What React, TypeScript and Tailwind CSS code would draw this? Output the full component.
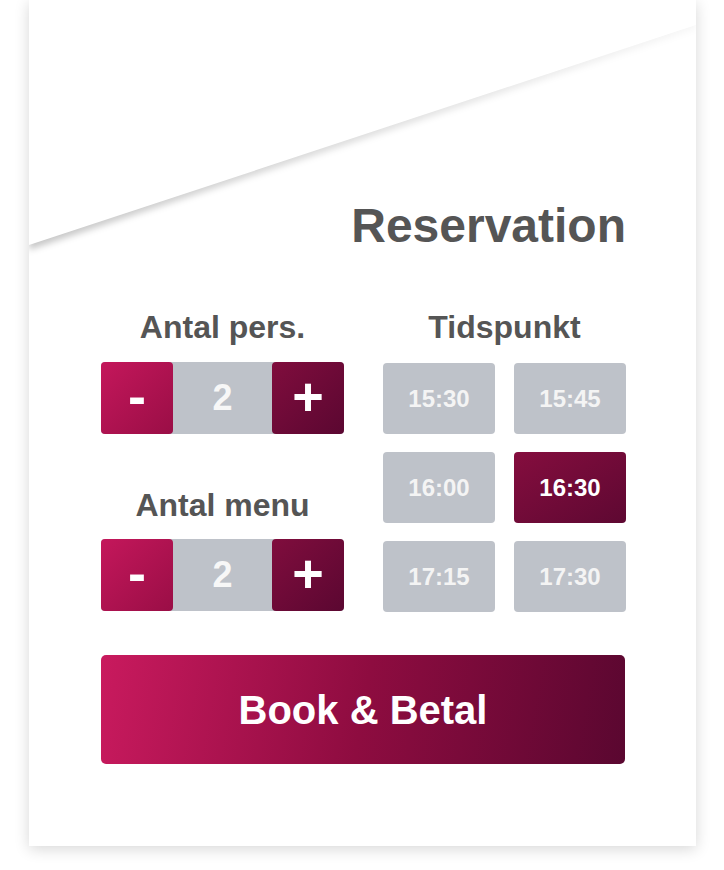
import React, { useState } from "react";

const times = ["15:30", "15:45", "16:00", "16:30", "17:15", "17:30"];

// Stepper med minus / tal / plus
function Stepper({ value, onChange }: { value: number; onChange: (v: number) => void }) {
  return (
    <div className="flex h-[72px] w-[243px] rounded-[4px] bg-[#bec2c9]">
      <button
        onClick={() => onChange(Math.max(1, value - 1))}
        className="flex w-[72px] items-center justify-center rounded-[4px] bg-gradient-to-br from-[#c4175b] to-[#9a0e46] pb-[4px] text-[54px] leading-none font-bold text-white"
      >
        -
      </button>
      <div className="flex flex-1 items-center justify-center text-[36px] leading-none font-bold text-[#f7f7f7]">
        {value}
      </div>
      <button
        onClick={() => onChange(value + 1)}
        className="flex w-[72px] items-center justify-center rounded-[4px] bg-gradient-to-br from-[#800d3d] to-[#5b0731] pb-[4px] text-[54px] leading-none font-bold text-white"
      >
        +
      </button>
    </div>
  );
}

export default function App() {
  const [pers, setPers] = useState(2);
  const [menu, setMenu] = useState(2);
  const [time, setTime] = useState("16:30");

  return (
    <div
      className="min-h-[870px] bg-white"
      style={{ fontFamily: '"Liberation Sans", Arial, sans-serif' }}
    >
      <div className="relative ml-[29px] h-[846px] w-[667px] bg-white shadow-[0_3px_14px_rgba(0,0,0,0.16)]">
        {/* skrå fold i toppen */}
        <svg
          className="pointer-events-none absolute top-0 left-0"
          width="667"
          height="270"
          viewBox="0 0 667 270"
        >
          <defs>
            <linearGradient id="fold" x1="0" y1="0" x2="1" y2="0">
              <stop offset="0" stopColor="#000" stopOpacity="0.22" />
              <stop offset="1" stopColor="#000" stopOpacity="0.03" />
            </linearGradient>
            <filter id="blur" x="-10%" y="-10%" width="120%" height="130%">
              <feGaussianBlur stdDeviation="3" />
            </filter>
          </defs>
          <polygon points="0,3 667,3 667,29 0,250" fill="url(#fold)" filter="url(#blur)" />
          <polygon points="0,0 667,0 667,25 0,245" fill="#ffffff" />
        </svg>

        <div className="relative flex flex-col pt-[202px] pr-[70px] pl-[72px]">
          <h1 className="text-right text-[48px] leading-none font-bold text-[#555555]">
            Reservation
          </h1>

          <div className="mt-[61px] flex gap-[39px]">
            {/* venstre kolonne */}
            <div className="flex w-[243px] flex-col items-center">
              <div className="text-[32px] leading-[32px] font-bold text-[#555555]">Antal pers.</div>
              <div className="mt-[19px]">
                <Stepper value={pers} onChange={setPers} />
              </div>
              <div className="mt-[55px] text-[32px] leading-[32px] font-bold text-[#555555]">Antal menu</div>
              <div className="mt-[18px]">
                <Stepper value={menu} onChange={setMenu} />
              </div>
            </div>

            {/* højre kolonne */}
            <div className="flex w-[243px] flex-col items-center">
              <div className="text-[32px] leading-[32px] font-bold text-[#555555]">Tidspunkt</div>
              <div className="mt-[20px] grid w-[243px] grid-cols-2 gap-x-[19px] gap-y-[18px]">
                {times.map((t) => (
                  <button
                    key={t}
                    onClick={() => setTime(t)}
                    className={
                      t === time
                        ? "flex h-[71px] items-center justify-center rounded-[4px] bg-gradient-to-br from-[#850d3e] to-[#5e0832] text-[24px] font-bold text-white"
                        : "flex h-[71px] items-center justify-center rounded-[4px] bg-[#bec2c9] text-[24px] font-bold text-[#f4f4f4]"
                    }
                  >
                    {t}
                  </button>
                ))}
              </div>
            </div>
          </div>

          <button className="mt-[43px] flex h-[109px] w-[524px] items-center justify-center rounded-[5px] bg-[linear-gradient(100deg,#c91a5e_0%,#8e0c40_50%,#5a0730_100%)] text-[40px] font-bold text-white">
            Book &amp; Betal
          </button>
        </div>
      </div>
    </div>
  );
}
